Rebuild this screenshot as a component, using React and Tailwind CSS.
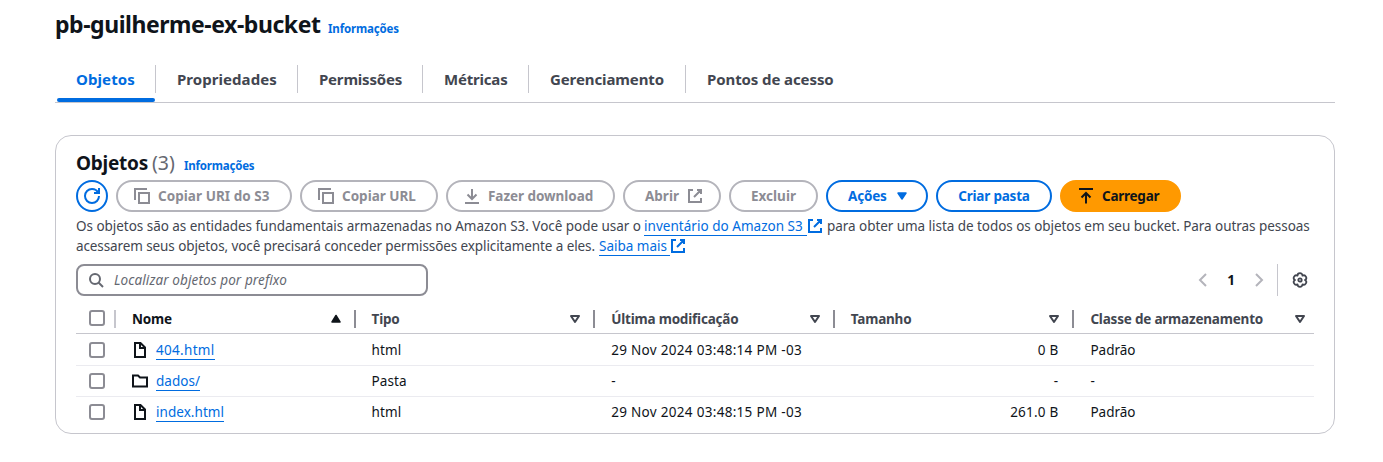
const Svg = ({ children, className = '' }) => (
  <svg viewBox="0 0 16 16" width="16" height="16" fill="none" stroke="currentColor" strokeWidth="2" className={`shrink-0 ${className}`}>
    {children}
  </svg>
);

const Copy = () => <Svg><path d="M15 5H5v10h10V5Z M13 1H1v11" /></Svg>;
const Refresh = () => (
  <Svg className="overflow-visible">
    <path d="M10 5h5V0M15 8a6.957 6.957 0 0 1-7 7 6.957 6.957 0 0 1-7-7 6.957 6.957 0 0 1 7-7 6.87 6.87 0 0 1 6.3 4" />
  </Svg>
);
const Download = () => <Svg><path d="M1 15h14M12.5 6.5 8 11 3.5 6.5M8 1v10" /></Svg>;
const Upload = () => <Svg><path d="M1 1h14M12.5 9.5 8 5 3.5 9.5M8 5v10.5" /></Svg>;
const External = ({ className }) => <Svg className={className}><path d="M10 2h4v4M7 9l7-7M14 10v4H2V2h4" /></Svg>;
const File = () => <Svg><path d="M3 1v14h10V5.500L8.500 1H3Z" /><path d="M8 1v5h5" /></Svg>;
const Folder = () => <Svg><path d="M1 13.500v-11h5l2 2h7v9H1Z" /></Svg>;
const Gear = () => (
  <Svg>
    <path
      strokeLinejoin="round"
      strokeWidth="1.8"
      d="M13 8A2.5 2.5 0 0 1 10.5 12.33A2.5 2.5 0 0 1 5.5 12.33A2.5 2.5 0 0 1 3 8A2.5 2.5 0 0 1 5.5 3.67A2.5 2.5 0 0 1 10.5 3.67A2.5 2.5 0 0 1 13 8Z"
    />
    <circle cx="8" cy="8" r="1.7" strokeWidth="1.8" />
  </Svg>
);

const Button = ({ className, children }) => (
  <button className={`flex h-8 shrink-0 items-center rounded-full border-2 text-[13.5px] font-bold whitespace-nowrap ${className}`}>
    {children}
  </button>
);

const disabled = 'border-[#b4b4bb] text-[#8c8c94]';
const active = 'border-[#006ce0] text-[#006ce0]';

const TABS = [
  ['Objetos', 'w-[101px]', 'tracking-[0.1px]'],
  ['Propriedades', 'w-[142px]', 'tracking-[0.05px]'],
  ['Permissões', 'w-[125px]', 'tracking-[-0.2px]'],
  ['Métricas', 'w-[106px]', 'tracking-[-0.2px]'],
  ['Gerenciamento', 'w-[157px]', 'tracking-[-0.1px]'],
  ['Pontos de acesso', 'w-[170px]', 'tracking-[-0.1px]'],
];

const COLUMNS = ['Nome', 'Tipo', 'Última modificação', 'Tamanho', 'Classe de armazenamento'];

const ROWS = [
  ['404.html', 'html', '29 Nov 2024 03:48:14 PM -03', '0 B', 'Padrão'],
  ['dados/', 'Pasta', '-', '-', '-'],
  ['index.html', 'html', '29 Nov 2024 03:48:15 PM -03', '261.0 B', 'Padrão'],
];

const Checkbox = () => <span className="ml-[13px] block size-4 rounded-[3px] border-2 border-[#8c8c94]" />;

const Link = ({ children, className = '' }) => (
  <span className={`border-b border-[#006ce0] text-[#006ce0] ${className}`}>{children}</span>
);

export default function App() {
  return (
    <main className="h-[462px] overflow-hidden bg-white pl-[55px] font-['Noto_Sans',sans-serif] text-[13.5px] text-[#0f141a]">
      <div className="w-[1280px]">
        <header className="flex h-[50px] items-baseline pt-[9px]">
          <h1 className="w-[273px] text-[23px] leading-[30px] font-bold tracking-[-0.45px] whitespace-nowrap">pb-guilherme-ex-bucket</h1>
          <a className="text-[11.5px] font-bold tracking-[-0.15px] text-[#006ce0]">Informações</a>
        </header>

        <nav className="flex h-[53px] border-b border-[#c6c6cd] text-[15px] font-bold text-[#424650]">
          {TABS.map(([label, width, tracking], i) => (
            <div key={label} className={`flex flex-col ${width} ${i === 0 ? 'text-[#006ce0]' : ''}`}>
              <span className={`mt-[15px] flex h-7 items-center pt-px pl-[21px] whitespace-nowrap ${tracking} ${i < 5 ? 'border-r border-[#c6c6cd]' : ''}`}>
                {label}
              </span>
              {i === 0 && <span className="mt-[5px] ml-0.5 h-1 w-[98px] rounded-[2px] bg-[#006ce0]" />}
            </div>
          ))}
        </nav>

        <section className="mt-8 h-[299px] rounded-2xl border border-[#c6c6cd] px-5">
          <div className="flex h-11 items-baseline pt-[13px] whitespace-nowrap">
            <h2 className="w-[76px] text-[19px] leading-7 font-bold tracking-[-0.25px]">Objetos</h2>
            <span className="w-[32px] text-[19.5px] leading-7 text-[#656871]">(3)</span>
            <a className="text-[11.5px] font-bold tracking-[-0.2px] text-[#006ce0]">Informações</a>
          </div>

          <div className="flex gap-2">
            <Button className={`w-8 justify-center ${active}`}><Refresh /></Button>
            <Button className={`w-[176px] gap-2 pl-4 tracking-[0.05px] ${disabled}`}><Copy />Copiar URI do S3</Button>
            <Button className={`w-[138px] gap-2 pl-4 tracking-[0px] ${disabled}`}><Copy />Copiar URL</Button>
            <Button className={`w-[169px] gap-2 pl-4 tracking-[-0.05px] ${disabled}`}><Download />Fazer download</Button>
            <Button className={`w-[98px] gap-2 pl-5 tracking-[0px] ${disabled}`}>Abrir<External /></Button>
            <Button className={`w-[89px] justify-center tracking-[0px] ${disabled}`}>Excluir</Button>
            <Button className={`w-[102px] gap-[7px] pl-5 tracking-[-0.2px] ${active}`}>
              Ações
              <Svg><path d="M4 5h8l-4 6-4-6Z" fill="currentColor" strokeLinejoin="round" strokeWidth="1.500" /></Svg>
            </Button>
            <Button className={`w-[116px] justify-center tracking-[-0.2px] ${active}`}>Criar pasta</Button>
            <Button className="w-[121px] gap-2 border-[#ff9900] bg-[#ff9900] pl-4 tracking-[-0.25px] text-[#0f141a]"><Upload />Carregar</Button>
          </div>

          <div className="mt-1 text-[#424650]">
            <p className="flex h-5 items-center whitespace-nowrap">
              <span className="w-[568px] tracking-[-0.035px]">Os objetos são as entidades fundamentais armazenadas no Amazon S3. Você pode usar o</span>
              <Link className="w-[163px] leading-[18px] tracking-[0.03px]">inventário do Amazon S3</Link>
              <External className="text-[#006ce0]" />
              <span className="ml-1 tracking-[-0.05px]">para obter uma lista de todos os objetos em seu bucket. Para outras pessoas</span>
            </p>
            <p className="flex h-5 items-center whitespace-nowrap">
              <span className="w-[523px] tracking-[-0.1px]">acessarem seus objetos, você precisará conceder permissões explicitamente a eles.</span>
              <Link className="w-[71px] leading-[18px] tracking-[0px]">Saiba mais</Link>
              <External className="text-[#006ce0]" />
            </p>
          </div>

          <div className="mt-2 flex h-8 items-center">
            <div className="flex h-8 w-[352px] items-center rounded-lg border-2 border-[#8c8c94] pl-[10px] text-[#656871]">
              <Svg><circle cx="7" cy="7" r="5" /><path d="m10.500 10.500 4.500 4.500" /></Svg>
              <span className="ml-[10px] tracking-[0.1px] italic">Localizar objetos por prefixo</span>
            </div>
            <div className="ml-auto flex h-8 items-center">
              <Svg className="text-[#b4b4bb]"><path d="M11 2 5 8l6 6" /></Svg>
              <span className="w-10 text-center font-bold">1</span>
              <Svg className="text-[#b4b4bb]"><path d="m5 2 6 6-6 6" /></Svg>
              <span className="ml-[10px] h-8 w-px bg-[#c6c6cd]" />
              <span className="mr-[6px] ml-[14px] text-[#424650]"><Gear /></span>
            </div>
          </div>

          <div className="mt-2 whitespace-nowrap">
            <div className="grid h-[30px] grid-cols-[40px_repeat(5,minmax(0,1fr))] border-b border-[#c6c6cd] pt-[6px] font-bold text-[#424650]">
              <div className="h-[18px] border-r-2 border-[#c6c6cd]"><Checkbox /></div>
              {COLUMNS.map((label, i) => (
                <div
                  key={label}
                  className={`flex h-[18px] items-center justify-between pl-4 ${i < 4 ? 'border-r-2 border-[#8c8c94] pr-[10px]' : 'pr-[6px]'} ${i === 0 ? 'text-[#0f141a]' : ''}`}
                >
                  <span className="tracking-[-0.2px]">{label}</span>
                  <Svg>
                    {i === 0
                      ? <path d="M8 4.500 12 11H4l4-6.500Z" fill="currentColor" strokeWidth="1.500" strokeLinejoin="round" />
                      : <path d="M4 5h8l-4 6-4-6Z" strokeLinejoin="round" />}
                  </Svg>
                </div>
              ))}
            </div>
            {ROWS.map(([name, type, date, size, storage], i) => (
              <div
                key={name}
                className={`grid grid-cols-[40px_repeat(5,minmax(0,1fr))] items-center ${i === 0 ? 'h-8 border-b border-[#ebebf0] pt-px' : i === 1 ? 'h-[31px] border-b border-[#ebebf0]' : 'h-[30px]'}`}
              >
                <Checkbox />
                <div className="flex items-center gap-2 pl-4">
                  {name.endsWith('/') ? <Folder /> : <File />}
                  <Link className={`leading-[18px] ${i === 0 ? 'tracking-[0.3px]' : 'tracking-[0.05px]'}`}>{name}</Link>
                </div>
                <span className="pl-4 tracking-[0.1px]">{type}</span>
                <span className="pl-4 tracking-[0.3px]">{date}</span>
                <span className="pr-4 text-right tracking-[0.2px]">{size}</span>
                <span className="pl-4">{storage}</span>
              </div>
            ))}
          </div>
        </section>
      </div>
    </main>
  );
}
